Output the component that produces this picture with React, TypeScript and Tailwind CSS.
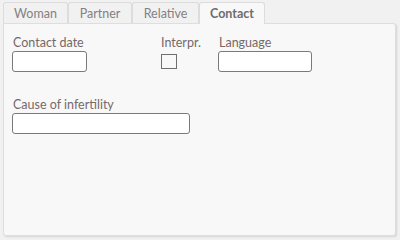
const tabs = [
  { name: 'Woman', w: 'w-[65px]' },
  { name: 'Partner', w: 'w-[64px]' },
  { name: 'Relative', w: 'w-[67px]' },
  { name: 'Contact', w: 'w-[66px]' },
]

function Field({ label, width }: { label: string; width: string }) {
  return (
    <div className="flex flex-col">
      <span className="h-[15px] pl-[1px] text-[12.5px] leading-[15px] text-[#766868]">{label}</span>
      <div className={`mt-[1px] h-[21px] ${width} rounded-[3px] border border-[#7a7a7a] bg-white`} />
    </div>
  )
}

export default function App() {
  return (
    <div
      className="h-[240px] w-[400px] bg-[#f1f1f1] px-[3px] pt-[2px]"
      style={{ fontFamily: 'Lato, "Open Sans", sans-serif' }}
    >
      <div className="flex">
        {tabs.map((t) => {
          const active = t.name === 'Contact'
          return (
            <div
              key={t.name}
              className={
                active
                  ? `relative z-10 -mb-px flex h-[22px] ${t.w} items-center justify-center rounded-t-[3px] border border-b-0 border-[#dcdcdc] bg-[#f8f8f8] pt-[2px] text-[12.5px] font-bold text-[#716a6a]`
                  : `flex h-[21px] ${t.w} items-center justify-center rounded-t-[3px] border border-b-0 border-[#dcdcdc] bg-[#f1f1f1] pt-[2px] text-[12.5px] text-[#858080]`
              }
            >
              {t.name}
            </div>
          )
        })}
      </div>
      <div className="h-[213px] w-[393px] rounded-b-[3px] rounded-tr-[3px] border border-[#dedede] bg-[#f8f8f8] px-[8px] pt-[11px] shadow-[1px_1px_2px_rgba(0,0,0,0.12)]">
        <div className="flex">
          <div className="w-[149px]">
            <Field label="Contact date" width="w-[75px]" />
          </div>
          <div className="flex w-[57px] flex-col">
            <span className="h-[15px] text-[12.5px] leading-[15px] text-[#766868]">Interpr.</span>
            <div className="mt-[4px] h-[15px] w-[16px] border border-[#6e6e6e] bg-[#f8f8f8]" />
          </div>
          <Field label="Language" width="w-[94px]" />
        </div>
        <div className="mt-[25px]">
          <Field label="Cause of infertility" width="w-[178px]" />
        </div>
      </div>
    </div>
  )
}
